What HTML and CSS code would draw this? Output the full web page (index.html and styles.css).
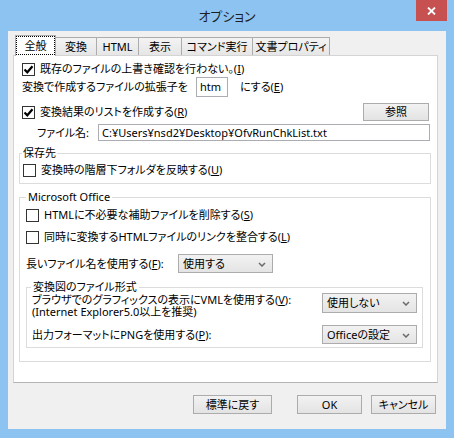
FILE: index.html
```html
<!DOCTYPE html>
<html lang="ja">
<head>
<meta charset="utf-8">
<title>オプション</title>
<link rel="stylesheet" href="styles.css">
</head>
<body>
<div class="window">
  <div class="titlebar">
    <span class="title">オプション</span>
    <div class="close">
      <svg width="9" height="8" viewBox="0 0 9 8"><path d="M1 0.5 L8 7.5 M8 0.5 L1 7.5" stroke="#fff" stroke-width="1.8" fill="none"/></svg>
    </div>
  </div>
  <div class="client">
    <div class="tabs">
      <div class="tab tab-sel t1"><span class="focus">全般</span></div>
      <div class="tab t2">変換</div>
      <div class="tab t3">HTML</div>
      <div class="tab t4">表示</div>
      <div class="tab t5">コマンド実行</div>
      <div class="tab t6">文書プロパティ</div>
    </div>
    <div class="panel">
      <div class="row r1">
        <span class="cb"><svg width="11" height="11" viewBox="0 0 11 11"><path d="M1.5 5.5 L4.3 8.3 L9.5 2.2" stroke="#000" stroke-width="2.2" fill="none"/></svg></span>
        <span>既存のファイルの上書き確認を行わない。(<u>I</u>)</span>
      </div>
      <div class="row r2">
        <span class="ext-label">変換で作成するファイルの拡張子を</span>
        <span class="input ext">htm</span>
        <span>にする(<u>E</u>)</span>
      </div>
      <div class="row r3">
        <span class="cb"><svg width="11" height="11" viewBox="0 0 11 11"><path d="M1.5 5.5 L4.3 8.3 L9.5 2.2" stroke="#000" stroke-width="2.2" fill="none"/></svg></span>
        <span>変換結果のリストを作成する(<u>R</u>)</span>
        <span class="btn browse">参照</span>
      </div>
      <div class="row r4">
        <span class="fn-label">ファイル名:</span>
        <span class="input path">C:¥Users¥nsd2¥Desktop¥OfvRunChkList.txt</span>
      </div>
      <fieldset class="grp g1">
        <legend>保存先</legend>
        <div class="row">
          <span class="cb"></span>
          <span>変換時の階層下フォルダを反映する(<u>U</u>)</span>
        </div>
      </fieldset>
      <fieldset class="grp g2">
        <legend>Microsoft Office</legend>
        <div class="row c1">
          <span class="cb"></span>
          <span>HTMLに不必要な補助ファイルを削除する(<u>S</u>)</span>
        </div>
        <div class="row c2">
          <span class="cb"></span>
          <span>同時に変換するHTMLファイルのリンクを整合する(<u>L</u>)</span>
        </div>
        <div class="row c3">
          <span class="long-label">長いファイル名を使用する(<u>F</u>):</span>
          <span class="select sel-long">使用する<svg class="chev" width="8" height="5" viewBox="0 0 8 5"><path d="M1 1 L4 4 L7 1" stroke="#6a6a6a" stroke-width="1.5" fill="none"/></svg></span>
        </div>
        <fieldset class="grp g3">
          <legend>変換図のファイル形式</legend>
          <div class="row vml">
            <span class="twoline"><span class="ln">ブラウザでのグラフィックスの表示にVMLを使用する(<u>V</u>):</span><span class="ln">(Internet Explorer5.0以上を推奨)</span></span>
            <span class="select sel-fmt">使用しない<svg class="chev" width="8" height="5" viewBox="0 0 8 5"><path d="M1 1 L4 4 L7 1" stroke="#6a6a6a" stroke-width="1.5" fill="none"/></svg></span>
          </div>
          <div class="row png">
            <span>出力フォーマットにPNGを使用する(<u>P</u>):</span>
            <span class="select sel-fmt">Officeの設定<svg class="chev" width="8" height="5" viewBox="0 0 8 5"><path d="M1 1 L4 4 L7 1" stroke="#6a6a6a" stroke-width="1.5" fill="none"/></svg></span>
          </div>
        </fieldset>
      </fieldset>
    </div>
    <div class="buttons">
      <span class="btn b-reset">標準に戻す</span>
      <span class="btn b-ok">OK</span>
      <span class="btn b-cancel">キャンセル</span>
    </div>
  </div>
</div>
</body>
</html>
```

FILE: styles.css
```css
* { box-sizing: border-box; }
html, body { margin: 0; padding: 0; }
body { background: #8cc3f0; }

.window {
  width: 454px;
  height: 438px;
  background: #8cc3f0;
  display: flex;
  flex-direction: column;
  font-family: "Noto Sans", "Noto Sans CJK JP", sans-serif;
  font-size: 11px;
  line-height: 14px;
  font-feature-settings: "palt";
  color: #000;
}

.titlebar {
  height: 31px;
  position: relative;
  display: flex;
  justify-content: center;
  align-items: center;
  flex: none;
}
.title {
  font-size: 13px;
  line-height: 18px;
  color: #1e1e1e;
  margin-top: 1px;
}
.close {
  position: absolute;
  top: 0;
  right: 7px;
  width: 31px;
  height: 21px;
  background: #c75050;
  display: flex;
  align-items: center;
  justify-content: center;
}

.client {
  flex: 1;
  margin: 0 8px 9px;
  background: #f0f0f0;
  padding: 4px 8px 0 5px;
  display: flex;
  flex-direction: column;
}

/* tabs */
.tabs {
  height: 20px;
  display: flex;
  align-items: flex-end;
  padding-left: 2px;
  flex: none;
}
.tab {
  height: 18px;
  border: 1px solid #acacac;
  border-bottom: none;
  border-left: none;
  background: linear-gradient(#f3f3f3, #e6e6e6);
  display: flex;
  align-items: center;
  justify-content: center;
  padding-top: 1px;
  white-space: nowrap;
}
.tab-sel {
  height: 21px;
  margin-bottom: -1px;
  background: #fff;
  border-left: 1px solid #acacac;
  position: relative;
  z-index: 1;
  padding: 1px 1px 2px 1px;
  align-items: stretch;
}
.focus {
  flex: 1;
  outline: 1px dotted #000;
  display: flex;
  align-items: center;
  justify-content: center;
}
.t1 { width: 41px; }
.t2 { width: 41px; }
.t3 { width: 42px; }
.t4 { width: 43px; }
.t5 { width: 71px; }
.t6 { width: 77px; }

/* panel */
.panel {
  height: 328px;
  flex: none;
  background: #fff;
  border: 1px solid #d4d4d4;
  border-bottom-color: #b4b4b4;
  padding: 6px 6px 0 5px;
  display: flex;
  flex-direction: column;
}

.row {
  display: flex;
  align-items: center;
  white-space: nowrap;
}

.cb {
  width: 13px;
  height: 13px;
  border: 1px solid #333;
  background: #fff;
  margin-right: 5px;
  display: flex;
  align-items: center;
  justify-content: center;
  flex: none;
}

.r1 { height: 14px; padding-left: 3px; }
.r2 { height: 20px; margin-top: 1px; padding-left: 3px; }
.r3 { height: 18px; margin-top: 6px; padding-left: 3px; padding-right: 2px; }
.r4 { height: 17px; margin-top: 3px; padding-left: 18px; padding-right: 1px; }

.input {
  background: #fff;
  border: 1px solid #abadb3;
  display: flex;
  align-items: center;
  padding-left: 3px;
}
.ext-label { width: 174px; }
.ext { width: 32px; height: 20px; margin-right: 12px; }
.fn-label { width: 61px; }
.path { flex: 1; height: 17px; }

.btn {
  background: linear-gradient(#f2f2f2, #e3e3e3);
  border: 1px solid #acacac;
  display: flex;
  align-items: center;
  justify-content: center;
}
.browse { width: 66px; height: 18px; margin-left: auto; }

/* group boxes */
.grp {
  margin: 0;
  border: 1px solid #dcdcdc;
  min-width: 0;
}
.grp legend {
  line-height: 14px;
  padding: 0 1px;
}
.g1 { margin-top: 5px; padding: 3px 0 6px 3px; }
.g1 legend { margin-left: -1px; }
.g2 { margin-top: 6px; padding: 4px 7px 13px 6px; }
.g2 legend { padding: 0 2px; }
.c1 { height: 14px; }
.c2 { height: 14px; margin-top: 8px; }
.c3 { height: 19px; margin-top: 10px; }
.long-label { width: 152px; }

.select {
  position: relative;
  background: linear-gradient(#f2f2f2, #e4e4e4);
  border: 1px solid #acacac;
  display: flex;
  align-items: center;
  padding-left: 4px;
}
.chev {
  position: absolute;
  right: 6px;
  top: 50%;
  margin-top: -2px;
}
.sel-long { width: 95px; height: 19px; }
.sel-fmt { width: 95px; margin-left: auto; }

.g3 { margin-top: 7px; padding: 0 5px 3px 4px; }
.g3 legend { padding: 0 2px; }
.vml { align-items: flex-start; padding-left: 1px; }
.twoline { display: flex; flex-direction: column; }
.ln { display: block; height: 12px; line-height: 12px; }
.vml .sel-fmt { height: 20px; margin-top: -1px; }
.png { height: 19px; margin-top: 7px; padding-left: 1px; }
.png .sel-fmt { height: 19px; }

/* bottom buttons */
.buttons {
  display: flex;
  justify-content: flex-end;
  margin-top: 12px;
  margin-right: 2px;
  height: 19px;
  flex: none;
}
.b-reset { width: 79px; }
.b-ok { width: 65px; margin-left: 25px; }
.b-cancel { width: 65px; margin-left: 9px; }
```
